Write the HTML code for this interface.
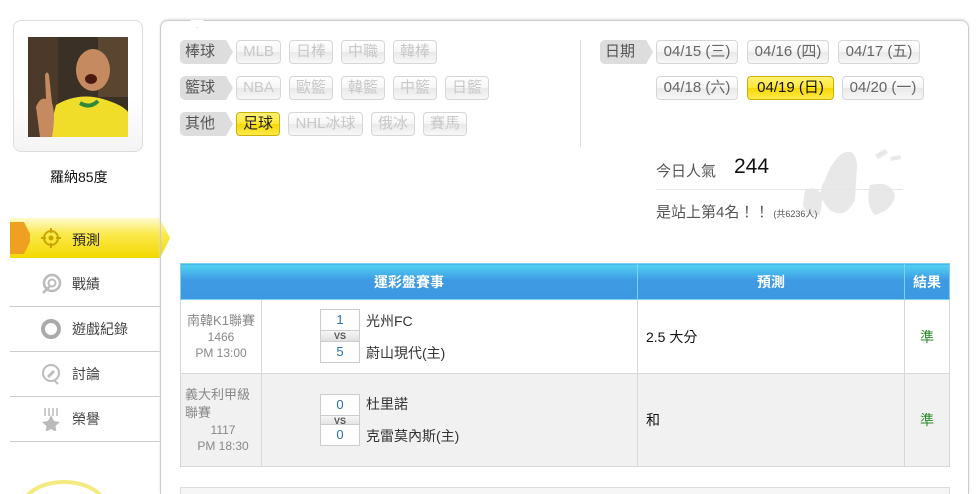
<!DOCTYPE html>
<html><head><meta charset="utf-8"><style>
*{margin:0;padding:0;box-sizing:border-box}
html,body{width:979px;height:494px;overflow:hidden}
body{background:#fff;font-family:"Liberation Sans","Noto Sans CJK TC",sans-serif;font-size:14px;color:#333;position:relative}
.a{position:absolute}
.card{left:13px;top:20px;width:130px;height:132px;border:1px solid #ddd;border-radius:8px;background:linear-gradient(#fff 60%,#f4f4f4)}
.panel{left:160px;top:20px;width:809px;height:474px;border:1px solid #ccc;border-radius:8px 8px 0 0;border-bottom:none;box-shadow:0 -1px 2px #ddd}
.lbl{height:24px;line-height:24px;width:46px;background:#ddd;border-radius:5px 0 0 5px;color:#555;font-size:15px;padding-left:5px}
.lbl:after{content:"";position:absolute;right:-7px;top:0;border-left:7px solid #ddd;border-top:12px solid transparent;border-bottom:12px solid transparent}
.b{height:24px;line-height:22px;border:1px solid #d6d6d6;border-radius:4px;background:linear-gradient(#fff,#f6f6f6 50%,#e9e9e9 51%,#f7f7f7);color:#c8c8c8;text-align:center;font-size:15px}
.y{background:linear-gradient(#fff27a,#ffe733 50%,#f5d800 51%,#ffe94a);border-color:#cdb100;color:#222}
.d{color:#666;font-size:15px}
.menu{left:10px;width:150px;height:45px;border-bottom:1px solid #ccc;font-size:14px;color:#444;line-height:45px;padding-left:62px}
table{position:absolute;left:180px;top:263px;width:770px;border-collapse:collapse}
th{background:linear-gradient(#52d3f2,#3d9ae3 45%,#3c98e2);color:#fff;height:36px;font-size:14px;border:1px solid #7fd0f2}
td{border:1px solid #d8d8d8;font-size:14px}
.sc{width:40px;height:22px;border:1px solid #ccc;text-align:center;line-height:20px;color:#2a6db5;font-size:13px;background:#fff}
.vs{width:40px;height:11px;font-size:9px;line-height:11px;text-align:center;background:linear-gradient(#f6f6f6,#ddd);color:#555;border-left:1px solid #ccc;border-right:1px solid #ccc;font-weight:bold}
</style></head><body>
<div class="a card"></div>
<svg class="a" style="left:28px;top:37px" width="100" height="100" viewBox="0 0 100 100">
<rect width="100" height="100" fill="#3a3026"/>
<rect x="0" y="0" width="30" height="100" fill="#4b3a2a"/>
<rect x="70" y="0" width="30" height="60" fill="#5a4530"/>
<path d="M20 100 L28 68 Q50 55 75 62 Q95 68 100 75 L100 100Z" fill="#f0dd2a"/>
<path d="M52 66 Q62 72 70 64" stroke="#2d8a3a" stroke-width="4" fill="none"/>
<ellipse cx="65" cy="33" rx="17" ry="21" fill="#c58a60"/>
<ellipse cx="63" cy="42" rx="6" ry="5" fill="#4a1a12"/>
<path d="M12 100 L8 70 Q12 60 18 62 L17 38 Q19 33 21 38 L24 66 Q28 78 24 100Z" fill="#c58a60"/>
</svg>
<div class="a" style="left:50px;top:167px;font-size:14px;color:#111">羅納85度</div>

<div class="a" style="left:10px;top:218px;width:160px;height:40px;background:linear-gradient(#fffbd0,#fbe94c 40%,#f3d900);clip-path:polygon(0 0,150px 0,160px 20px,150px 40px,0 40px)"></div>
<div class="a" style="left:10px;top:222px;width:20px;height:32px;background:#f0a020;clip-path:polygon(0 0,14px 0,22px 16px,14px 32px,0 32px)"></div>
<svg class="a" style="left:40px;top:227px" width="22" height="22" viewBox="0 0 22 22"><circle cx="11" cy="11" r="7" fill="none" stroke="#c9a500" stroke-width="2"/><circle cx="11" cy="11" r="2.5" fill="#c9a500"/><path d="M11 1v5M11 16v5M1 11h5M16 11h5" stroke="#c9a500" stroke-width="2"/></svg>
<div class="a" style="left:72px;top:230px;font-size:14px;color:#222">預測</div>

<div class="a menu" style="top:262px">戰績</div>
<div class="a menu" style="top:307px">遊戲紀錄</div>
<div class="a menu" style="top:352px">討論</div>
<div class="a menu" style="top:397px">榮譽</div>
<svg class="a" style="left:40px;top:273px" width="22" height="22"><circle cx="12" cy="10" r="8" fill="none" stroke="#bbb" stroke-width="2.5"/><circle cx="12" cy="10" r="3.5" fill="none" stroke="#bbb" stroke-width="2"/><path d="M3 20l7-7" stroke="#bbb" stroke-width="2.5"/></svg>
<svg class="a" style="left:40px;top:318px" width="22" height="22"><circle cx="11" cy="11" r="8" fill="none" stroke="#aaa" stroke-width="4"/></svg>
<svg class="a" style="left:40px;top:363px" width="22" height="22"><circle cx="11" cy="10" r="8" fill="none" stroke="#bbb" stroke-width="2"/><path d="M14 17l4 4" stroke="#bbb" stroke-width="2"/><path d="M7 13l6-6 2 2-6 6z" fill="#bbb"/></svg>
<svg class="a" style="left:40px;top:407px" width="22" height="24"><path d="M5 1v8M9 1v8M13 1v8M17 1v8" stroke="#bbb" stroke-width="1.5"/><path d="M11 8l3 6 6 1-4.5 4 1 6-5.5-3-5.5 3 1-6L2 15l6-1z" fill="#bbb"/></svg>
<svg class="a" style="left:10px;top:478px" width="110" height="16"><ellipse cx="54" cy="32" rx="43" ry="28" fill="none" stroke="#f3ea80" stroke-width="4"/></svg>

<div class="a panel"></div>
<div class="a" style="left:190px;top:20px;width:14px;height:8px;background:#fff;border-bottom:1px solid #ccc;clip-path:polygon(0 0,100% 0,50% 100%)"></div>

<div class="a lbl" style="left:180px;top:40px">棒球</div>
<div class="a b" style="left:236px;top:40px;width:45px">MLB</div>
<div class="a b" style="left:289px;top:40px;width:44px">日棒</div>
<div class="a b" style="left:341px;top:40px;width:44px">中職</div>
<div class="a b" style="left:393px;top:40px;width:44px">韓棒</div>
<div class="a lbl" style="left:180px;top:76px">籃球</div>
<div class="a b" style="left:236px;top:76px;width:45px">NBA</div>
<div class="a b" style="left:289px;top:76px;width:44px">歐籃</div>
<div class="a b" style="left:341px;top:76px;width:44px">韓籃</div>
<div class="a b" style="left:393px;top:76px;width:44px">中籃</div>
<div class="a b" style="left:445px;top:76px;width:44px">日籃</div>
<div class="a lbl" style="left:180px;top:112px">其他</div>
<div class="a b y" style="left:236px;top:112px;width:44px">足球</div>
<div class="a b" style="left:288px;top:112px;width:75px">NHL冰球</div>
<div class="a b" style="left:371px;top:112px;width:44px">俄冰</div>
<div class="a b" style="left:423px;top:112px;width:44px">賽馬</div>
<div class="a" style="left:580px;top:40px;width:1px;height:107px;background:#ddd"></div>

<div class="a lbl" style="left:600px;top:40px">日期</div>
<div class="a b d" style="left:656px;top:40px;width:82px">04/15 (三)</div>
<div class="a b d" style="left:747px;top:40px;width:82px">04/16 (四)</div>
<div class="a b d" style="left:838px;top:40px;width:82px">04/17 (五)</div>
<div class="a b d" style="left:656px;top:76px;width:82px">04/18 (六)</div>
<div class="a b y d" style="left:747px;top:76px;width:87px;color:#111">04/19 (日)</div>
<div class="a b d" style="left:842px;top:76px;width:82px">04/20 (一)</div>

<svg class="a" style="left:795px;top:145px" width="110" height="80"><g fill="#e8e8e8"><path d="M45 10 Q60 0 62 20 L60 55 Q50 75 35 65 Q20 50 30 35 Q35 20 45 10Z"/><path d="M75 40 Q95 35 100 50 Q98 65 80 70 Q70 60 75 40Z"/><path d="M10 45 Q20 40 28 50 L25 70 Q10 72 8 60Z"/><path d="M80 10l10-6 3 4-10 6zM95 12l10-2 1 4-10 2z"/></g></svg>
<div class="a" style="left:656px;top:160px;font-size:15px;color:#555">今日人氣</div>
<div class="a" style="left:734px;top:155px;font-size:21px;color:#111">244</div>
<div class="a" style="left:656px;top:189px;width:247px;height:1px;background:#e5e5e5"></div>
<div class="a" style="left:656px;top:201px;font-size:15px;color:#555">是站上第4名！！<span style="font-size:9px;margin-left:4px">(共6236人)</span></div>

<table>
<tr><th style="width:458px" colspan="2">運彩盤賽事</th><th style="width:267px">預測</th><th style="width:45px">結果</th></tr>
<tr style="height:74px;background:#fff"><td style="width:81px;text-align:center;color:#888;line-height:16px;font-size:13px">南韓K1聯賽<br><span style="font-size:12px">1466<br>PM 13:00</span></td>
<td><div style="position:relative;height:56px;margin-left:58px"><div class="sc a" style="top:0;left:0">1</div><div class="vs a" style="top:22px;left:0">VS</div><div class="sc a" style="top:32px;left:0">5</div><div class="a" style="left:46px;top:2px;color:#333">光州FC</div><div class="a" style="left:46px;top:34px;color:#333">蔚山現代(主)</div></div></td>
<td style="padding-left:8px;color:#111">2.5 大分</td><td style="text-align:center;color:#2a8a2a">準</td></tr>
<tr style="height:93px;background:#f1f1f1"><td style="text-align:left;color:#888;line-height:18px;padding-left:4px;font-size:13px">義大利甲級<br>聯賽<br><div style="text-align:center;font-size:12px;line-height:16px">1117<br>PM 18:30</div></td>
<td><div style="position:relative;height:52px;margin-left:58px"><div class="sc a" style="top:0;left:0">0</div><div class="vs a" style="top:22px;left:0">VS</div><div class="sc a" style="top:30px;left:0">0</div><div class="a" style="left:46px;top:0;color:#333">杜里諾</div><div class="a" style="left:46px;top:32px;color:#333">克雷莫內斯(主)</div></div></td>
<td style="padding-left:8px;color:#111">和</td><td style="text-align:center;color:#2a8a2a">準</td></tr>
</table>
<div class="a" style="left:180px;top:487px;width:770px;height:7px;border:1px solid #ddd;border-bottom:none;background:#f6f6f6"></div>
</body></html>
